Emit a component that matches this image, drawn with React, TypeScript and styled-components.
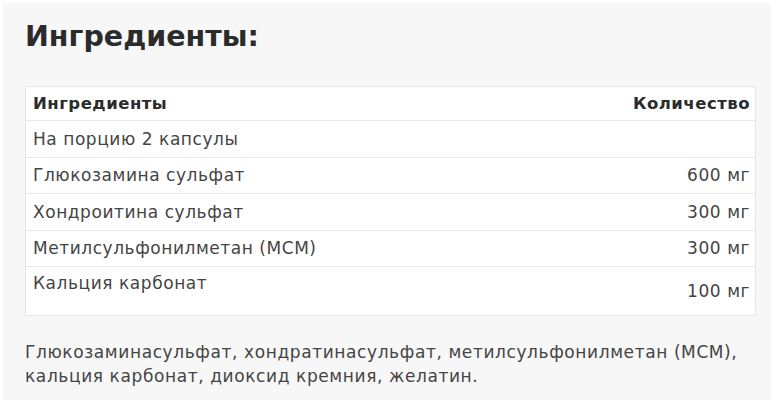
import React from "react";
import styled, { createGlobalStyle } from "styled-components";

const Global = createGlobalStyle`
  html, body { margin: 0; padding: 0; background: #ffffff; }
  body { font-family: "DejaVu Sans", "Noto Sans", sans-serif; color: #3a3a3a; }
`;

const Page = styled.div`
  padding: 3px 6px 7px 3px;
`;

const Panel = styled.section`
  background: #f7f7f7;
  padding: 14px 16px 14px 22px;
  height: 397px;
  box-sizing: border-box;
`;

const Title = styled.h2`
  margin: 0;
  font-size: 28.5px;
  line-height: 40px;
  font-weight: 700;
  color: #2b2b2b;
`;

const Table = styled.table`
  margin-top: 29px;
  width: 731px;
  border-collapse: collapse;
  background: #ffffff;
  border: 1px solid #e4e4e4;
`;

const Row = styled.tr<{ $h: number }>`
  height: ${(p) => p.$h}px;
  border-bottom: 1px solid #e8e8e8;
`;

const Head = styled.th<{ $right?: boolean }>`
  text-align: ${(p) => (p.$right ? "right" : "left")};
  font-size: 16.5px;
  letter-spacing: 0.5px;
  font-weight: 700;
  color: #2b2b2b;
  padding: 0 5px 0 7px;
`;

const Cell = styled.td<{ $right?: boolean; $top?: boolean }>`
  text-align: ${(p) => (p.$right ? "right" : "left")};
  vertical-align: ${(p) => (p.$top ? "top" : "middle")};
  padding: ${(p) => (p.$top ? "6px 5px 0 7px" : "0 5px 0 7px")};
  font-size: 17px;
  letter-spacing: 0.55px;
  color: #444444;
`;

const Note = styled.p`
  margin: 24px 0 0 0;
  font-size: 17px;
  letter-spacing: 0.6px;
  line-height: 24px;
  color: #444444;
  white-space: nowrap;
`;

const rows: [string, string][] = [
  ["На порцию 2 капсулы", ""],
  ["Глюкозамина сульфат", "600 мг"],
  ["Хондроитина сульфат", "300 мг"],
  ["Метилсульфонилметан (МСМ)", "300 мг"],
];

export default function App() {
  return (
    <>
      <Global />
      <Page>
        <Panel>
          <Title>Ингредиенты:</Title>
          <Table>
            <tbody>
              <Row $h={34}>
                <Head>Ингредиенты</Head>
                <Head $right>Количество</Head>
              </Row>
              {rows.map(([n, a]) => (
                <Row $h={36.5} key={n}>
                  <Cell>{n}</Cell>
                  <Cell $right>{a}</Cell>
                </Row>
              ))}
              <Row $h={49}>
                <Cell $top>Кальция карбонат</Cell>
                <Cell $right>100 мг</Cell>
              </Row>
            </tbody>
          </Table>
          <Note>
            Глюкозаминасульфат, хондратинасульфат, метилсульфонилметан (МСМ),
            <br />
            кальция карбонат, диоксид кремния, желатин.
          </Note>
        </Panel>
      </Page>
    </>
  );
}
